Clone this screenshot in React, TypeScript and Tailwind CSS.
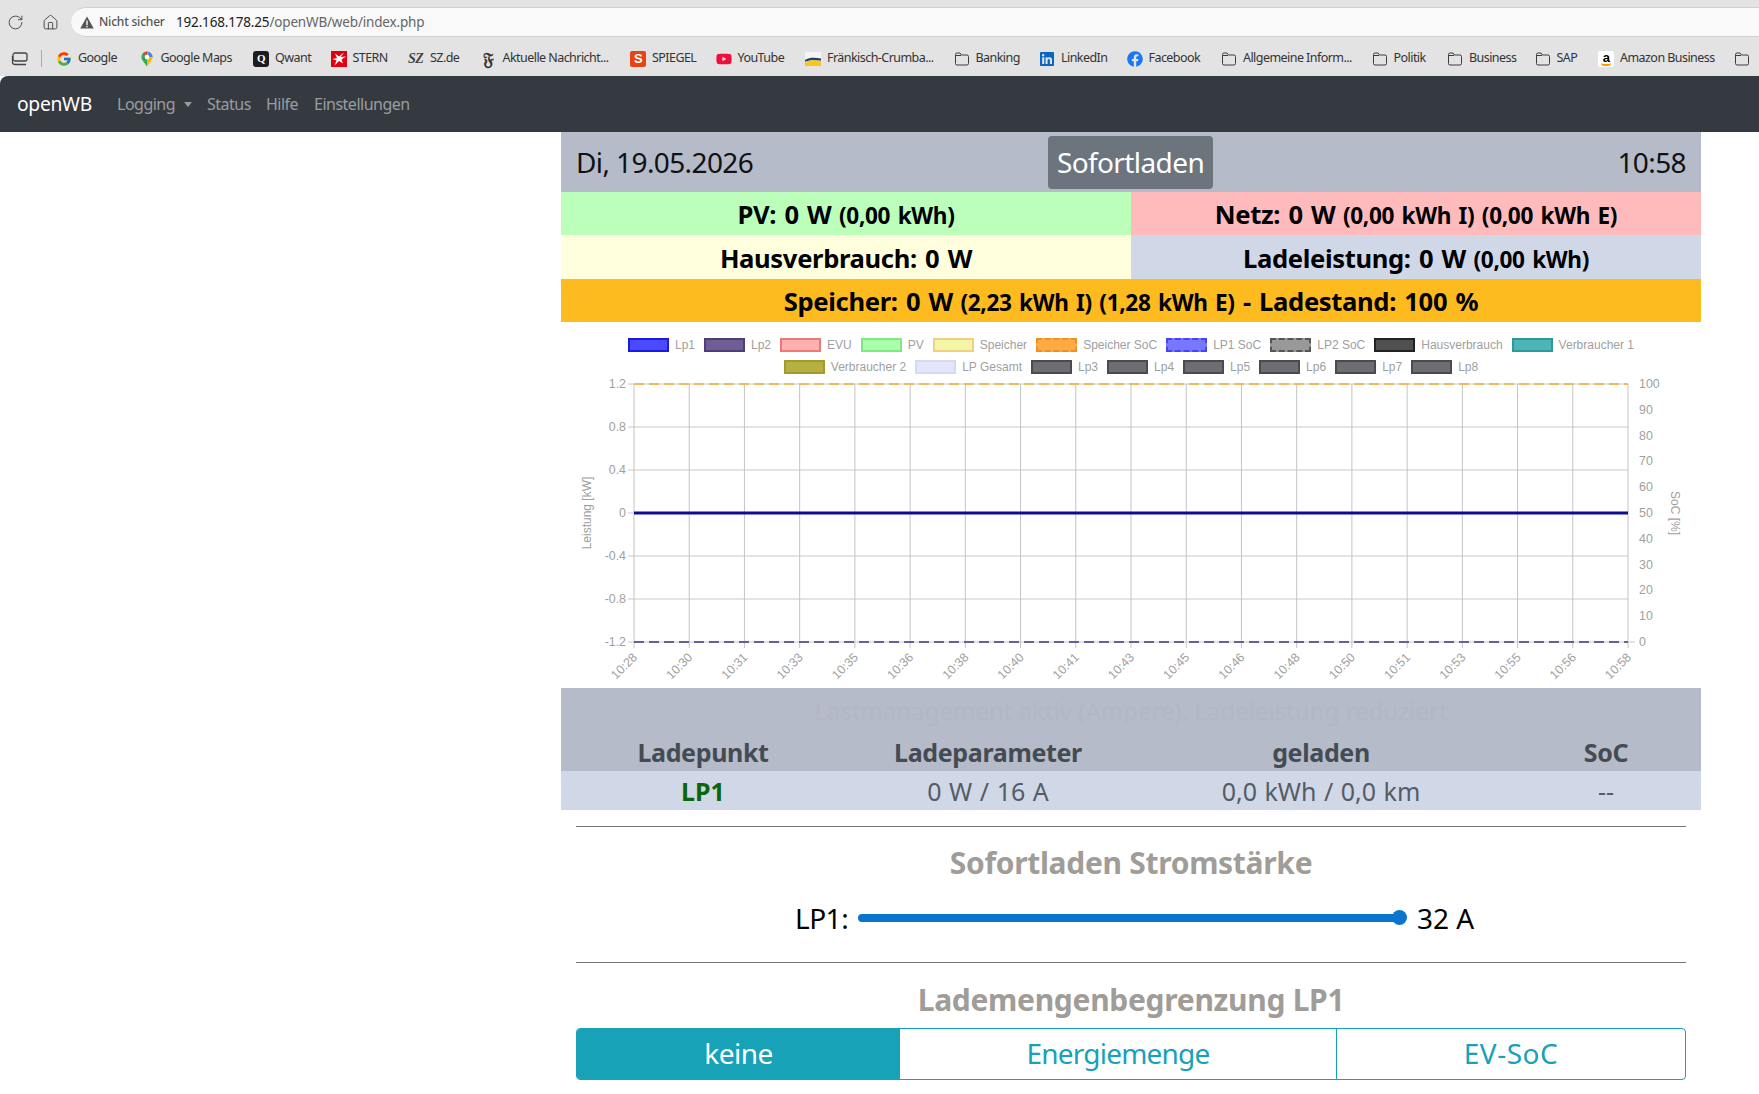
import { ReactNode } from "react";
import { RotateCw, House } from "lucide-react";
import { FcGoogle } from "react-icons/fc";
import { FaFacebook, FaLinkedin, FaYoutube } from "react-icons/fa";

function FolderIcon() {
  return (
    <svg width="16" height="16" viewBox="0 0 16 16" fill="none" stroke="#3c3c3c" strokeWidth="1">
      <path d="M1.5 3.5a1.5 1.5 0 0 1 1.5-1.5h3l1.5 2h5.5a1.5 1.5 0 0 1 1.5 1.5v7a1.5 1.5 0 0 1-1.5 1.5h-10a1.5 1.5 0 0 1-1.5-1.5z" />
      <path d="M1.5 4.5h5.5" />
    </svg>
  );
}

function MapsIcon() {
  return (
    <svg width="16" height="16" viewBox="0 0 16 16">
      <path d="M8 0.5a5.6 5.6 0 0 0-5.6 5.6c0 1.4.5 2.6 1.4 3.6L8 15.5z" fill="#34a853" />
      <path d="M8 0.5a5.6 5.6 0 0 1 5.6 5.6c0 1.4-.5 2.6-1.4 3.6L8 15.5z" fill="#fbbc04" />
      <path d="M3.2 3a5.6 5.6 0 0 1 4.8-2.5v3.4z" fill="#ea4335" />
      <path d="M8 .5a5.6 5.6 0 0 1 5.6 5.6H10z" fill="#4285f4" />
      <circle cx="8" cy="6.1" r="2.3" fill="#fff" />
    </svg>
  );
}

function QwantIcon() {
  return (
    <span className="flex h-4 w-4 items-center justify-center rounded-[3px] bg-[#1d1d20] font-['Liberation_Serif',serif] text-[11px] font-bold text-white">
      Q
    </span>
  );
}

function SternIcon() {
  return (
    <svg width="16" height="16" viewBox="0 0 16 16">
      <rect width="16" height="16" fill="#e3000f" />
      <path d="M13 1.5 9.8 6 15 5.5 10.5 8.5 12 12.5 8 10 3.5 14.5 5.5 9.500 1.500 8 6 7 4 2.500 8 5.500z" fill="#fff" />
    </svg>
  );
}

function SpiegelIcon() {
  return (
    <span className="flex h-4 w-4 items-center justify-center rounded-[2px] bg-[#e64415] font-['Liberation_Sans',sans-serif] text-[13px] font-bold text-white">
      S
    </span>
  );
}

function FaznetIcon() {
  return <span className="w-4 text-center font-['DejaVu_Serif',serif] text-[17px] font-bold leading-4 text-[#333]">𝔉</span>;
}

function SzIcon() {
  return <span className="w-[18px] font-['Liberation_Serif',serif] text-[14px] font-bold italic leading-4 text-[#444]">SZ</span>;
}

function FlagIcon() {
  return (
    <svg width="16" height="16" viewBox="0 0 16 16">
      <rect y="1" width="16" height="14" fill="#f4f4f4" />
      <path d="M0 9c4-2.6 10-2.6 16-1.4v2.200c-6-1-12-1-16 1z" fill="#1d3f76" />
      <path d="M0 11c4-2 10-2 16-1.200V15H0z" fill="#f6c81e" />
    </svg>
  );
}

function AmazonIcon() {
  return (
    <span className="relative flex h-4 w-4 justify-center rounded-[2px] bg-white font-['Liberation_Sans',sans-serif] text-[13px] font-bold leading-[13px] text-black">
      a
      <span className="absolute bottom-[1px] left-[3px] h-[3px] w-[10px] rounded-b-full border-b-2 border-[#f90]" />
    </span>
  );
}

const bookmarks: { icon: ReactNode; label: string; w: string }[] = [
  { icon: <FcGoogle size={16} />, label: "Google", w: "w-[39px]" },
  { icon: <MapsIcon />, label: "Google Maps", w: "w-[71px]" },
  { icon: <QwantIcon />, label: "Qwant", w: "w-[34px]" },
  { icon: <SternIcon />, label: "STERN", w: "w-[34px]" },
  { icon: <SzIcon />, label: "SZ.de", w: "w-[29px]" },
  { icon: <FaznetIcon />, label: "Aktuelle Nachricht...", w: "w-[106px]" },
  { icon: <SpiegelIcon />, label: "SPIEGEL", w: "w-[42px]" },
  { icon: <FaYoutube size={16} color="#f00f3c" />, label: "YouTube", w: "w-[46px]" },
  { icon: <FlagIcon />, label: "Fränkisch-Crumba...", w: "w-[105px]" },
  { icon: <FolderIcon />, label: "Banking", w: "w-[42px]" },
  { icon: <FaLinkedin size={16} color="#0a66c2" />, label: "LinkedIn", w: "w-[44px]" },
  { icon: <FaFacebook size={16} color="#1877f2" />, label: "Facebook", w: "w-[51px]" },
  { icon: <FolderIcon />, label: "Allgemeine Inform...", w: "w-[107px]" },
  { icon: <FolderIcon />, label: "Politik", w: "w-[32px]" },
  { icon: <FolderIcon />, label: "Business", w: "w-[44px]" },
  { icon: <FolderIcon />, label: "SAP", w: "w-[20px]" },
  { icon: <AmazonIcon />, label: "Amazon Business", w: "w-[92px]" },
  { icon: <FolderIcon />, label: "", w: "w-0" },
];

function BrowserChrome() {
  return (
    <div className="h-[76px] bg-[#e3e3e3] text-[#333]">
      <div className="flex h-[37px] items-center pt-[7px]">
        <RotateCw size={17} strokeWidth={1.3} className="ml-[7px] text-[#444]" />
        <House size={17} strokeWidth={1.3} className="ml-[18px] text-[#444]" />
        <div className="ml-[12px] flex h-[30px] flex-1 items-center rounded-l-[15px] border-y border-[#d0d0d0] bg-[#f9f9f9] pl-[9px]">
          <svg width="14" height="13" viewBox="0 0 14 13">
            <path d="M7 .5 13.800 12.500H.2z" fill="#555" />
            <rect x="6.300" y="4.500" width="1.400" height="4.500" fill="#f9f9f9" />
            <rect x="6.300" y="9.800" width="1.400" height="1.500" fill="#f9f9f9" />
          </svg>
          <span className="ml-[5px] w-[77px] text-[12px] font-medium tracking-[-0.2px] text-[#555]">Nicht sicher</span>
          <span className="text-[13.5px] tracking-[-0.17px] text-[#666]">
            <span className="text-[#222]">192.168.178.25</span>/openWB/web/index.php
          </span>
        </div>
      </div>
      <div className="flex h-[39px] items-center overflow-hidden whitespace-nowrap pt-[4px] text-[12.5px] tracking-[-0.55px]">
        <svg width="18" height="14" viewBox="0 0 18 14" fill="none" stroke="#444" strokeWidth="1.3" className="ml-[11px] shrink-0">
          <rect x="2" y="1" width="14" height="8" rx="2" />
          <path d="M1.500 4v6a2.500 2.500 0 0 0 2.500 2.500h11" />
        </svg>
        <div className="ml-[12px] h-[17px] w-px shrink-0 bg-[#aaa]" />
        <div className="ml-[14px] flex shrink-0 items-center gap-[21.5px]">
          {bookmarks.map((b, i) => (
            <div key={i} className="flex shrink-0 items-center gap-[6px]">
              <span className="flex h-4 w-4 items-center justify-center">{b.icon}</span>
              <span className={b.w}>{b.label}</span>
            </div>
          ))}
        </div>
      </div>
    </div>
  );
}

function NavBar() {
  return (
    <nav className="flex h-[56px] items-center rounded-tl-[8px] bg-[#343a40] pl-[17px] text-[16px] tracking-[-0.5px] text-[#9a9da0]">
      <span className="w-[100px] text-[19.3px] tracking-[-0.3px] text-white">openWB</span>
      <span className="w-[58px]">Logging</span>
      <span className="ml-[9px] mr-[15px] h-0 w-0 border-x-[4px] border-t-[5px] border-x-transparent border-t-[#9a9da0]" />
      <span className="w-[59px]">Status</span>
      <span className="w-[48px]">Hilfe</span>
      <span>Einstellungen</span>
    </nav>
  );
}

function Stat({ main, sub, suffix, bg }: { main: string; sub?: string; suffix?: string; bg: string }) {
  return (
    <div className={`flex h-full items-center justify-center pt-[4px] font-bold text-black ${bg}`}>
      <span className="text-[25.6px] tracking-[-0.35px] [word-spacing:2px]">
        {main}
        {sub && <span className="text-[22.6px]"> {sub}</span>}
        {suffix && <span> {suffix}</span>}
      </span>
    </div>
  );
}

const legendRow1 = [
  { label: "Lp1", c: "bg-[#4a4aff] border-[#1a1ae0]" },
  { label: "Lp2", c: "bg-[#6f5d94] border-[#4a3f7c]" },
  { label: "EVU", c: "bg-[#ffb0b0] border-[#ee7777]" },
  { label: "PV", c: "bg-[#aaffaa] border-[#80e880]" },
  { label: "Speicher", c: "bg-[#f5f5a8] border-[#f0d080]" },
  { label: "Speicher SoC", c: "bg-[#ffaa44] border-[#f09020] border-dashed" },
  { label: "LP1 SoC", c: "bg-[#7777ff] border-[#4444ff] border-dashed" },
  { label: "LP2 SoC", c: "bg-[#999999] border-[#555555] border-dashed" },
  { label: "Hausverbrauch", c: "bg-[#505050] border-[#222222]" },
  { label: "Verbraucher 1", c: "bg-[#4db5b5] border-[#2a9a9a]" },
];

const legendRow2 = [
  { label: "Verbraucher 2", c: "bg-[#b5b040] border-[#a09a30]" },
  { label: "LP Gesamt", c: "bg-[#e4e4fa] border-[#d8d8f0]" },
  { label: "Lp3", c: "bg-[#6e6e72] border-[#4a4a50]" },
  { label: "Lp4", c: "bg-[#6e6e72] border-[#4a4a50]" },
  { label: "Lp5", c: "bg-[#6e6e72] border-[#4a4a50]" },
  { label: "Lp6", c: "bg-[#6e6e72] border-[#4a4a50]" },
  { label: "Lp7", c: "bg-[#6e6e72] border-[#4a4a50]" },
  { label: "Lp8", c: "bg-[#6e6e72] border-[#4a4a50]" },
];

function LegendRow({ items }: { items: { label: string; c: string }[] }) {
  return (
    <div className="flex h-[22px] items-center justify-center gap-[9px] text-[12px]">
      {items.map((i) => (
        <div key={i.label} className="flex items-center gap-[6px]">
          <span className={`h-[14px] w-[41px] border-2 ${i.c}`} />
          <span>{i.label}</span>
        </div>
      ))}
    </div>
  );
}

const times = ["10:28", "10:30", "10:31", "10:33", "10:35", "10:36", "10:38", "10:40", "10:41", "10:43", "10:45", "10:46", "10:48", "10:50", "10:51", "10:53", "10:55", "10:56", "10:58"];
const leftTicks = ["1.2", "0.8", "0.4", "0", "-0.4", "-0.8", "-1.2"];
const rightTicks = ["100", "90", "80", "70", "60", "50", "40", "30", "20", "10", "0"];

// plot area inside the svg
const L = 73;
const R = 1067;
const T = 8;
const B = 266;

function Chart() {
  const stepX = (R - L) / 18;
  const stepY = (B - T) / 6;
  return (
    <div className="h-[366px] font-['Liberation_Sans',Arial,sans-serif] text-[12.4px] text-[#a0a0a0]">
      <div className="h-[54px] pt-[12px]">
        <LegendRow items={legendRow1} />
        <LegendRow items={legendRow2} />
      </div>
      <svg width="1140" height="312" className="block fill-[#a0a0a0]">
        {leftTicks.map((t, i) => (
          <g key={t}>
            <line x1={L - 6} x2={R} y1={T + i * stepY} y2={T + i * stepY} stroke="#c8c8c8" />
            <text x={L - 8} y={T + i * stepY + 4} textAnchor="end">{t}</text>
          </g>
        ))}
        {times.map((t, i) => (
          <g key={t}>
            <line x1={L + i * stepX} x2={L + i * stepX} y1={T} y2={B + 6} stroke="#c4c4c4" />
            <text x={L + i * stepX + 4} y={B + 16} textAnchor="end" transform={`rotate(-45 ${L + i * stepX + 4} ${B + 16})`}>
              {t}
            </text>
          </g>
        ))}
        {rightTicks.map((t, i) => (
          <text key={t} x={R + 11} y={T + (i * (B - T)) / 10 + 4}>{t}</text>
        ))}
        <line x1={R} x2={R + 7} y1={B} y2={B} stroke="#c8c8c8" />
        <line x1={L} x2={R} y1={T} y2={T} stroke="#f0b860" strokeWidth="2" strokeDasharray="10 5" />
        <line x1={L} x2={R} y1={B} y2={B} stroke="#6a5f95" strokeWidth="2" strokeDasharray="10 5" />
        <line x1={L} x2={R} y1={(T + B) / 2} y2={(T + B) / 2} stroke="#0c0c96" strokeWidth="3" />
        <text x="30" y="137" textAnchor="middle" transform="rotate(-90 30 137)" className="text-[12px]">Leistung [kW]</text>
        <text x="1110" y="137" textAnchor="middle" transform="rotate(90 1110 137)" className="text-[12px]">SoC [%]</text>
      </svg>
    </div>
  );
}

function SectionHeading({ children }: { children: ReactNode }) {
  return <h2 className="text-center text-[30px] font-bold leading-none tracking-[-0.3px] text-[#a09c98]">{children}</h2>;
}

export default function App() {
  return (
    <div className="h-[1094px] overflow-hidden bg-white font-['Noto_Sans',sans-serif]">
      <BrowserChrome />
      <NavBar />
      <main className="ml-[561px] w-[1140px]">
        <div className="flex h-[60px] items-center justify-between bg-[#b5bbc9] px-[15px] text-[28px] text-[#111]">
          <span className="w-[472px] tracking-[-0.6px]">Di, 19.05.2026</span>
          <span className="flex h-[53px] w-[165px] items-center justify-center rounded-[4px] bg-[#6c757d] tracking-[-0.6px] text-white">Sofortladen</span>
          <span className="w-[473px] text-right tracking-[-0.6px]">10:58</span>
        </div>
        <div className="grid h-[87px] grid-cols-2 grid-rows-[43px_44px]">
          <Stat main="PV: 0 W" sub="(0,00 kWh)" bg="bg-[#bbffbb]" />
          <Stat main="Netz: 0 W" sub="(0,00 kWh I) (0,00 kWh E)" bg="bg-[#ffbbbb]" />
          <Stat main="Hausverbrauch: 0 W" bg="bg-[#ffffdd]" />
          <Stat main="Ladeleistung: 0 W" sub="(0,00 kWh)" bg="bg-[#d0d8e8]" />
        </div>
        <div className="h-[43px]">
          <Stat main="Speicher: 0 W" sub="(2,23 kWh I) (1,28 kWh E)" suffix="- Ladestand: 100 %" bg="bg-[#febb1f]" />
        </div>
        <Chart />
        <div className="bg-[#b5bbc9] text-[25px] font-bold text-[#454b52]">
          <div className="flex h-[46px] items-end justify-center pb-[5px] text-[24px] font-normal text-[#b1b7c5]">Lastmanagement aktiv (Ampere), Ladeleistung reduziert</div>
          <div className="grid h-[37px] grid-cols-[284px_286px_380px_190px] items-center pb-[2px] text-center tracking-[-0.35px]">
            <span>Ladepunkt</span>
            <span>Ladeparameter</span>
            <span>geladen</span>
            <span>SoC</span>
          </div>
        </div>
        <div className="grid h-[39px] grid-cols-[284px_286px_380px_190px] items-center bg-[#d0d8e8] pt-[2px] text-center text-[25px] text-[#555c63] [word-spacing:1px]">
          <span className="font-bold text-[#0b660b]">LP1</span>
          <span>0 W / 16 A</span>
          <span>0,0 kWh / 0,0 km</span>
          <span>--</span>
        </div>
        <div className="px-[15px]">
          <hr className="mt-[16px] border-[#777]" />
          <div className="pt-[21px]">
            <SectionHeading>Sofortladen Stromstärke</SectionHeading>
          </div>
          <div className="mt-[19.500px] flex h-[40px] items-center pl-[219px] text-[28px] text-black">
            <span className="w-[63px] tracking-[-0.5px]">LP1:</span>
            <div className="relative h-[8px] w-[548px] rounded-full bg-[#0a74cf]">
              <span className="absolute -right-[1px] -top-[3.5px] h-[15px] w-[15px] rounded-full bg-[#0a74cf]" />
            </div>
            <span className="ml-[11px]">32 A</span>
          </div>
          <hr className="mt-[24px] border-[#777]" />
          <div className="pt-[22px]">
            <SectionHeading>Lademengenbegrenzung LP1</SectionHeading>
          </div>
          <div className="mt-[13px] grid h-[52px] grid-cols-[323px_436px_349px] overflow-hidden rounded-[4px] border border-[#17a2b8] text-center text-[28px] leading-[48px] text-[#17a2b8]">
            <span className="bg-[#17a2b8] tracking-[-0.5px] text-white">keine</span>
            <span className="tracking-[-0.8px]">Energiemenge</span>
            <span className="border-l border-[#17a2b8] tracking-[0.5px]">EV-SoC</span>
          </div>
        </div>
      </main>
    </div>
  );
}
